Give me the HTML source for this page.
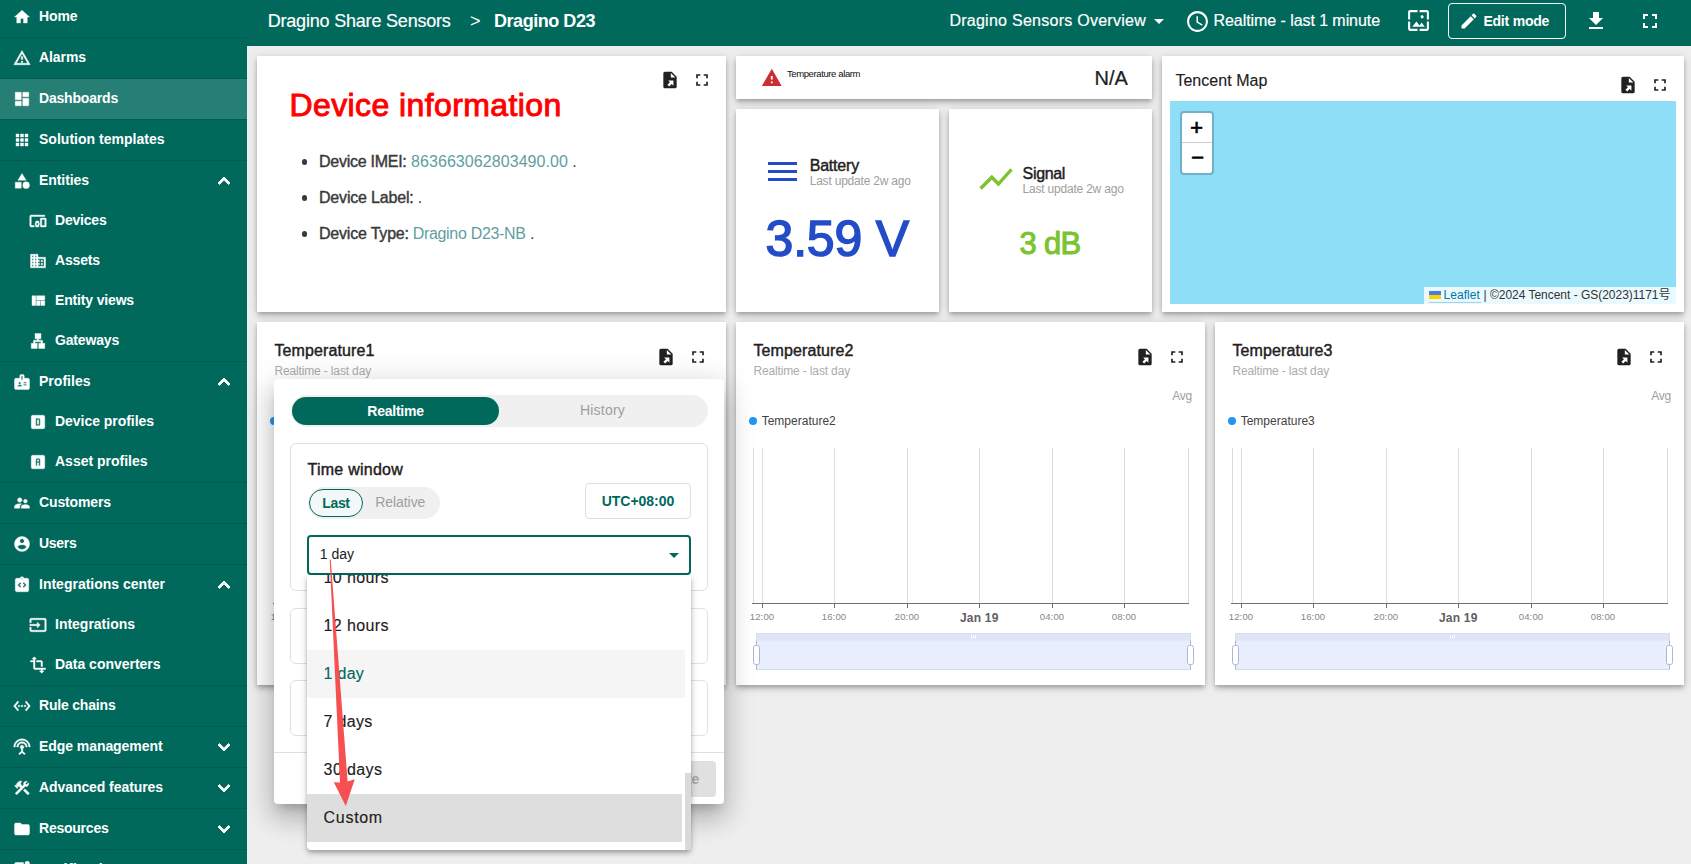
<!DOCTYPE html>
<html lang="en"><head><meta charset="utf-8"><title>Dragino D23</title>
<style>
html,body{margin:0;padding:0}
body{width:1691px;height:864px;overflow:hidden;background:#eee;position:relative;font-family:"Liberation Sans",sans-serif;}
.t{position:absolute;white-space:pre;line-height:1;display:block}
.b{position:absolute;box-sizing:border-box}
.i{position:absolute;display:block}
.card{position:absolute;background:#fff;box-shadow:0 2px 4px -1px rgba(0,0,0,.2),0 4px 5px 0 rgba(0,0,0,.14),0 1px 10px 0 rgba(0,0,0,.12)}
</style></head>
<body>
<div class="b" style="left:0px;top:0px;width:247px;height:864px;background:#00695c"></div>
<div class="b" style="left:247px;top:0px;width:1444px;height:46px;background:#00695c"></div>
<div class="b" style="left:0px;top:79px;width:247px;height:40px;background:rgba(255,255,255,.15)"></div>
<svg class="i" style="left:13.00px;top:8.00px;width:18px;height:18px;fill:#fff;stroke:#fff;stroke-width:.5;" viewBox="0 0 24 24"><path fill-rule="evenodd" d="M10 20v-6h4v6h5v-8h3L12 3 2 12h3v8z"/></svg>
<span class="t" style="left:39.00px;top:9.35px;font-size:14px;color:#fff;font-weight:700;letter-spacing:-0.102px;">Home</span>
<svg class="i" style="left:13.00px;top:49.00px;width:18px;height:18px;fill:#fff;stroke:#fff;stroke-width:.5;" viewBox="0 0 24 24"><path fill-rule="evenodd" d="M12 5.99L19.53 19H4.47L12 5.99M12 2L1 21h22L12 2zm1 14h-2v2h2v-2zm0-6h-2v4h2v-4z"/></svg>
<span class="t" style="left:39.00px;top:50.35px;font-size:14px;color:#fff;font-weight:700;letter-spacing:-0.078px;">Alarms</span>
<svg class="i" style="left:13.00px;top:90.00px;width:18px;height:18px;fill:#fff;stroke:#fff;stroke-width:.5;" viewBox="0 0 24 24"><path fill-rule="evenodd" d="M3 13h8V3H3v10zm0 8h8v-6H3v6zm10 0h8V11h-8v10zm0-18v6h8V3h-8z"/></svg>
<span class="t" style="left:39.00px;top:91.35px;font-size:14px;color:#fff;font-weight:700;letter-spacing:-0.192px;">Dashboards</span>
<svg class="i" style="left:13.00px;top:131.00px;width:18px;height:18px;fill:#fff;stroke:#fff;stroke-width:.5;" viewBox="0 0 24 24"><path fill-rule="evenodd" d="M4 8h4V4H4v4zm6 12h4v-4h-4v4zm-6 0h4v-4H4v4zm0-6h4v-4H4v4zm6 0h4v-4h-4v4zm6-10v4h4V4h-4zm-6 4h4V4h-4v4zm6 6h4v-4h-4v4zm0 6h4v-4h-4v4z"/></svg>
<span class="t" style="left:39.00px;top:132.35px;font-size:14px;color:#fff;font-weight:700;letter-spacing:0.015px;">Solution templates</span>
<svg class="i" style="left:13.00px;top:172.00px;width:18px;height:18px;fill:#fff;stroke:#fff;stroke-width:.5;" viewBox="0 0 24 24"><path fill-rule="evenodd" d="M12 2l-5.5 9h11L12 2zM17.5 13a4.5 4.5 0 1 0 0 9a4.5 4.5 0 1 0 0-9zM3 13.5h8v8H3z"/></svg>
<span class="t" style="left:39.00px;top:173.35px;font-size:14px;color:#fff;font-weight:700;letter-spacing:-0.072px;">Entities</span>
<svg class="i" style="left:211.60px;top:169.30px;width:24px;height:24px;fill:#fff;stroke:#fff;stroke-width:1;stroke-linejoin:miter;" viewBox="0 0 24 24"><path fill-rule="evenodd" d="M12 8l-6 6 1.41 1.41L12 10.83l4.59 4.580L18 14z"/></svg>
<svg class="i" style="left:29.00px;top:212.00px;width:18px;height:18px;fill:#fff;stroke:#fff;stroke-width:.5;" viewBox="0 0 24 24"><path fill-rule="evenodd" d="M3 6h18V4H3c-1.1 0-2 .9-2 2v12c0 1.1.9 2 2 2h4v-2H3V6zm10 6H9v1.78c-.61.55-1 1.33-1 2.22s.39 1.67 1 2.22V20h4v-1.780c.61-.55 1-1.34 1-2.22s-.39-1.67-1-2.22V12zm-2 5.5c-.83 0-1.5-.67-1.5-1.5s.67-1.5 1.5-1.5 1.5.67 1.5 1.5-.67 1.5-1.5 1.5zM22 8h-6c-.5 0-1 .5-1 1v10c0 .5.5 1 1 1h6c.5 0 1-.5 1-1V9c0-.5-.5-1-1-1zm-1 10h-4v-8h4v8z"/></svg>
<span class="t" style="left:55.00px;top:213.35px;font-size:14px;color:#fff;font-weight:700;letter-spacing:-0.205px;">Devices</span>
<svg class="i" style="left:29.00px;top:252.00px;width:18px;height:18px;fill:#fff;stroke:#fff;stroke-width:.5;" viewBox="0 0 24 24"><path fill-rule="evenodd" d="M12 7V3H2v18h20V7H12zM6 19H4v-2h2v2zm0-4H4v-2h2v2zm0-4H4V9h2v2zm0-4H4V5h2v2zm4 12H8v-2h2v2zm0-4H8v-2h2v2zm0-4H8V9h2v2zm0-4H8V5h2v2zm10 12h-8v-2h2v-2h-2v-2h2v-2h-2V9h8v10zm-2-8h-2v2h2v-2zm0 4h-2v2h2v-2z"/></svg>
<span class="t" style="left:55.00px;top:253.35px;font-size:14px;color:#fff;font-weight:700;letter-spacing:-0.154px;">Assets</span>
<svg class="i" style="left:29.00px;top:292.00px;width:18px;height:18px;fill:#fff;stroke:#fff;stroke-width:.5;" viewBox="0 0 24 24"><path fill-rule="evenodd" d="M10 18h5v-6h-5v6zm-6 0h5V5H4v13zm12 0h5v-6h-5v6zM10 5v6h11V5H10z"/></svg>
<span class="t" style="left:55.00px;top:293.35px;font-size:14px;color:#fff;font-weight:700;letter-spacing:-0.160px;">Entity views</span>
<svg class="i" style="left:29.00px;top:332.00px;width:18px;height:18px;fill:#fff;stroke:#fff;stroke-width:.5;" viewBox="0 0 24 24"><path fill-rule="evenodd" d="M13 22h8v-7h-3v-4h-5V9h3V2H8v7h3v2H6v4H3v7h8v-7H8v-2h8v2h-3z"/></svg>
<span class="t" style="left:55.00px;top:333.35px;font-size:14px;color:#fff;font-weight:700;letter-spacing:-0.172px;">Gateways</span>
<svg class="i" style="left:13.00px;top:373.00px;width:18px;height:18px;fill:#fff;stroke:#fff;stroke-width:.5;" viewBox="0 0 24 24"><path fill-rule="evenodd" d="M20 7h-5V4c0-1.1-.9-2-2-2h-2c-1.1 0-2 .9-2 2v3H4c-1.1 0-2 .9-2 2v11c0 1.1.9 2 2 2h16c1.1 0 2-.9 2-2V9c0-1.1-.9-2-2-2zM9 12c.83 0 1.5.67 1.5 1.5S9.83 15 9 15s-1.5-.67-1.5-1.5S8.17 12 9 12zm3 6H6v-.75c0-1 2-1.5 3-1.5s3 .5 3 1.5V18zm1-9h-2V4h2v5zm5 7.5h-4V15h4v1.5zm0-3h-4V12h4v1.5z"/></svg>
<span class="t" style="left:39.00px;top:374.35px;font-size:14px;color:#fff;font-weight:700;letter-spacing:0.018px;">Profiles</span>
<svg class="i" style="left:211.60px;top:370.30px;width:24px;height:24px;fill:#fff;stroke:#fff;stroke-width:1;stroke-linejoin:miter;" viewBox="0 0 24 24"><path fill-rule="evenodd" d="M12 8l-6 6 1.41 1.41L12 10.83l4.59 4.580L18 14z"/></svg>
<svg class="i" style="left:29.00px;top:413.00px;width:18px;height:18px;fill:#fff;stroke:#fff;stroke-width:.5;" viewBox="0 0 24 24"><path fill-rule="evenodd" d="M9,7H13A2,2 0 0,1 15,9V15A2,2 0 0,1 13,17H9V7M11,9V15H13V9H11M5,3H19A2,2 0 0,1 21,5V19A2,2 0 0,1 19,21H5A2,2 0 0,1 3,19V5A2,2 0 0,1 5,3Z"/></svg>
<span class="t" style="left:55.00px;top:414.35px;font-size:14px;color:#fff;font-weight:700;letter-spacing:-0.041px;">Device profiles</span>
<svg class="i" style="left:29.00px;top:453.00px;width:18px;height:18px;fill:#fff;stroke:#fff;stroke-width:.5;" viewBox="0 0 24 24"><path fill-rule="evenodd" d="M11,7H13A2,2 0 0,1 15,9V17H13V13H11V17H9V9A2,2 0 0,1 11,7M11,9V11H13V9H11M5,3H19A2,2 0 0,1 21,5V19A2,2 0 0,1 19,21H5A2,2 0 0,1 3,19V5A2,2 0 0,1 5,3Z"/></svg>
<span class="t" style="left:55.00px;top:454.35px;font-size:14px;color:#fff;font-weight:700;letter-spacing:-0.007px;">Asset profiles</span>
<svg class="i" style="left:13.00px;top:494.00px;width:18px;height:18px;fill:#fff;stroke:#fff;stroke-width:.5;" viewBox="0 0 24 24"><path fill-rule="evenodd" d="M16.5 12c1.38 0 2.49-1.12 2.49-2.5S17.88 7 16.5 7C15.12 7 14 8.12 14 9.5s1.12 2.5 2.5 2.5zM9 11c1.66 0 2.99-1.34 2.99-3S10.66 5 9 5C7.34 5 6 6.34 6 8s1.34 3 3 3zm7.5 3c-1.83 0-5.5.92-5.5 2.75V19h11v-2.25c0-1.83-3.67-2.75-5.5-2.75zM9 13c-2.33 0-7 1.17-7 3.5V19h7v-2.25c0-.85.33-2.34 2.37-3.47C10.5 13.1 9.66 13 9 13z"/></svg>
<span class="t" style="left:39.00px;top:495.35px;font-size:14px;color:#fff;font-weight:700;letter-spacing:-0.127px;">Customers</span>
<svg class="i" style="left:13.00px;top:535.00px;width:18px;height:18px;fill:#fff;stroke:#fff;stroke-width:.5;" viewBox="0 0 24 24"><path fill-rule="evenodd" d="M12 2C6.48 2 2 6.48 2 12s4.48 10 10 10 10-4.48 10-10S17.52 2 12 2zm0 3c1.66 0 3 1.34 3 3s-1.34 3-3 3-3-1.34-3-3 1.34-3 3-3zm0 14.2c-2.5 0-4.71-1.28-6-3.22.03-1.99 4-3.08 6-3.08 1.99 0 5.97 1.09 6 3.08-1.29 1.94-3.5 3.22-6 3.22z"/></svg>
<span class="t" style="left:39.00px;top:536.35px;font-size:14px;color:#fff;font-weight:700;letter-spacing:-0.284px;">Users</span>
<svg class="i" style="left:13.00px;top:576.00px;width:18px;height:18px;fill:#fff;stroke:#fff;stroke-width:.5;" viewBox="0 0 24 24"><path fill-rule="evenodd" d="M19 3h-4.18C14.4 1.84 13.3 1 12 1c-1.3 0-2.4.84-2.82 2H5c-.14 0-.27.01-.4.04-.39.08-.74.28-1.01.55-.18.18-.33.4-.43.64-.1.23-.16.49-.16.77v14c0 .27.06.54.16.78s.25.45.43.64c.27.27.62.47 1.01.55.13.02.26.03.4.03h14c1.1 0 2-.9 2-2V5c0-1.1-.9-2-2-2zm-8 11.17l-1.41 1.42L6 12l3.59-3.59L11 9.83 8.83 12 11 14.170zm1-9.92c-.41 0-.75-.34-.75-.75s.34-.75.75-.75.75.34.75.75-.34.75-.75.75zm2.410 11.340L13 14.170 15.170 12 13 9.830l1.410-1.420L18 12l-3.590 3.590z"/></svg>
<span class="t" style="left:39.00px;top:577.35px;font-size:14px;color:#fff;font-weight:700;">Integrations center</span>
<svg class="i" style="left:211.60px;top:573.30px;width:24px;height:24px;fill:#fff;stroke:#fff;stroke-width:1;stroke-linejoin:miter;" viewBox="0 0 24 24"><path fill-rule="evenodd" d="M12 8l-6 6 1.41 1.41L12 10.83l4.59 4.580L18 14z"/></svg>
<svg class="i" style="left:29.00px;top:616.00px;width:18px;height:18px;fill:#fff;stroke:#fff;stroke-width:.5;" viewBox="0 0 24 24"><path fill-rule="evenodd" d="M21 3.01H3c-1.1 0-2 .9-2 2V9h2V4.99h18v14.030H3V15H1v4.010c0 1.1.9 1.980 2 1.980h18c1.1 0 2-.88 2-1.980v-14c0-1.110-.9-2-2-2zM11 16l4-4-4-4v3H1v2h10v3z"/></svg>
<span class="t" style="left:55.00px;top:617.35px;font-size:14px;color:#fff;font-weight:700;letter-spacing:-0.010px;">Integrations</span>
<svg class="i" style="left:29.00px;top:656.00px;width:18px;height:18px;fill:#fff;stroke:#fff;stroke-width:.5;" viewBox="0 0 24 24"><path fill-rule="evenodd" d="M22 18v-2H8V4h2L7 1 4 4h2v2H2v2h4v8c0 1.1.9 2 2 2h8v2h-2l3 3 3-3h-2v-2h4zM10 8h6v6h2V8c0-1.1-.9-2-2-2h-6v2z"/></svg>
<span class="t" style="left:55.00px;top:657.35px;font-size:14px;color:#fff;font-weight:700;letter-spacing:-0.022px;">Data converters</span>
<svg class="i" style="left:13.00px;top:697.00px;width:18px;height:18px;fill:#fff;stroke:#fff;stroke-width:.5;" viewBox="0 0 24 24"><path fill-rule="evenodd" d="M7.77 6.76L6.23 5.48.82 12l5.41 6.52 1.54-1.28L3.42 12l4.35-5.24zM7 13h2v-2H7v2zm10-2h-2v2h2v-2zm-6 2h2v-2h-2v2zm6.77-7.52l-1.54 1.28L20.58 12l-4.35 5.24 1.54 1.28L23.18 12l-5.41-6.52z"/></svg>
<span class="t" style="left:39.00px;top:698.35px;font-size:14px;color:#fff;font-weight:700;letter-spacing:-0.190px;">Rule chains</span>
<svg class="i" style="left:13.00px;top:738.00px;width:18px;height:18px;fill:#fff;stroke:#fff;stroke-width:.5;" viewBox="0 0 24 24"><path fill-rule="evenodd" d="M12 5c-3.87 0-7 3.13-7 7h2c0-2.76 2.24-5 5-5s5 2.24 5 5h2c0-3.87-3.13-7-7-7zm1 9.29c.88-.39 1.5-1.26 1.5-2.29 0-1.38-1.12-2.5-2.5-2.5S9.5 10.62 9.5 12c0 1.02.62 1.9 1.5 2.29v3.3L7.59 21 9 22.41l3-3 3 3L16.41 21 13 17.59v-3.3zM12 1C5.93 1 1 5.93 1 12h2c0-4.97 4.03-9 9-9s9 4.03 9 9h2c0-6.07-4.93-11-11-11z"/></svg>
<span class="t" style="left:39.00px;top:739.35px;font-size:14px;color:#fff;font-weight:700;letter-spacing:-0.066px;">Edge management</span>
<svg class="i" style="left:211.60px;top:735.30px;width:24px;height:24px;fill:#fff;stroke:#fff;stroke-width:1;stroke-linejoin:miter;" viewBox="0 0 24 24"><path fill-rule="evenodd" d="M16.59 8.59L12 13.17 7.41 8.59 6 10l6 6 6-6z"/></svg>
<svg class="i" style="left:13.00px;top:779.00px;width:18px;height:18px;fill:#fff;stroke:#fff;stroke-width:.5;" viewBox="0 0 24 24"><path fill-rule="evenodd" d="M13.783 15.172l2.121-2.121 5.996 5.996-2.121 2.121zM17.5 10c1.93 0 3.5-1.57 3.5-3.5 0-.58-.16-1.12-.41-1.6l-2.7 2.7-1.49-1.49 2.7-2.7c-.48-.25-1.02-.41-1.6-.41C15.57 3 14 4.57 14 6.5c0 .41.08.8.21 1.16l-1.85 1.85-1.78-1.780.71-.71-1.41-1.41L12 3.490c-1.17-1.17-3.07-1.17-4.24 0L4.220 7.030l1.410 1.410H2.810l-.71.71 3.540 3.540.71-.71V9.150l1.410 1.410.71-.71 1.780 1.780-7.410 7.410 2.120 2.120L16.340 9.790c.36.13.75.21 1.160.21z"/></svg>
<span class="t" style="left:39.00px;top:780.35px;font-size:14px;color:#fff;font-weight:700;letter-spacing:-0.075px;">Advanced features</span>
<svg class="i" style="left:211.60px;top:776.30px;width:24px;height:24px;fill:#fff;stroke:#fff;stroke-width:1;stroke-linejoin:miter;" viewBox="0 0 24 24"><path fill-rule="evenodd" d="M16.59 8.59L12 13.17 7.41 8.59 6 10l6 6 6-6z"/></svg>
<svg class="i" style="left:13.00px;top:820.00px;width:18px;height:18px;fill:#fff;stroke:#fff;stroke-width:.5;" viewBox="0 0 24 24"><path fill-rule="evenodd" d="M10 4H4c-1.1 0-1.99.9-1.99 2L2 18c0 1.1.9 2 2 2h16c1.1 0 2-.9 2-2V8c0-1.1-.9-2-2-2h-8l-2-2z"/></svg>
<span class="t" style="left:39.00px;top:821.35px;font-size:14px;color:#fff;font-weight:700;letter-spacing:-0.233px;">Resources</span>
<svg class="i" style="left:211.60px;top:817.30px;width:24px;height:24px;fill:#fff;stroke:#fff;stroke-width:1;stroke-linejoin:miter;" viewBox="0 0 24 24"><path fill-rule="evenodd" d="M16.59 8.59L12 13.17 7.41 8.59 6 10l6 6 6-6z"/></svg>
<svg class="i" style="left:13.00px;top:861.00px;width:18px;height:18px;fill:#fff;stroke:#fff;stroke-width:.5;" viewBox="0 0 24 24"><path fill-rule="evenodd" d="M22 6.980V16c0 1.100-.900 2-2 2H6l-4 4V4c0-1.100.900-2 2-2h10.100c-.060.320-.100.660-.100 1 0 2.760 2.240 5 5 5 1.130 0 2.160-.390 3-1.020zM16 3c0 1.660 1.340 3 3 3s3-1.340 3-3-1.340-3-3-3-3 1.340-3 3z"/></svg>
<span class="t" style="left:39.00px;top:862.35px;font-size:14px;color:#fff;font-weight:700;letter-spacing:0.426px;">Notification center</span>
<div class="b" style="left:0px;top:37px;width:247px;height:1px;background:rgba(0,0,0,.12)"></div>
<div class="b" style="left:0px;top:78px;width:247px;height:1px;background:rgba(0,0,0,.12)"></div>
<div class="b" style="left:0px;top:119px;width:247px;height:1px;background:rgba(0,0,0,.12)"></div>
<div class="b" style="left:0px;top:160px;width:247px;height:1px;background:rgba(0,0,0,.12)"></div>
<div class="b" style="left:0px;top:361px;width:247px;height:1px;background:rgba(0,0,0,.12)"></div>
<div class="b" style="left:0px;top:482px;width:247px;height:1px;background:rgba(0,0,0,.12)"></div>
<div class="b" style="left:0px;top:523px;width:247px;height:1px;background:rgba(0,0,0,.12)"></div>
<div class="b" style="left:0px;top:564px;width:247px;height:1px;background:rgba(0,0,0,.12)"></div>
<div class="b" style="left:0px;top:685px;width:247px;height:1px;background:rgba(0,0,0,.12)"></div>
<div class="b" style="left:0px;top:726px;width:247px;height:1px;background:rgba(0,0,0,.12)"></div>
<div class="b" style="left:0px;top:767px;width:247px;height:1px;background:rgba(0,0,0,.12)"></div>
<div class="b" style="left:0px;top:808px;width:247px;height:1px;background:rgba(0,0,0,.12)"></div>
<div class="b" style="left:0px;top:849px;width:247px;height:1px;background:rgba(0,0,0,.12)"></div>
<span class="t" style="left:267.70px;top:11.76px;font-size:18px;color:#fff;-webkit-text-stroke:0.18px #fff;letter-spacing:-0.196px;">Dragino Share Sensors</span>
<span class="t" style="left:470.00px;top:11.76px;font-size:18px;color:#fff;letter-spacing:-1.016px;">&gt;</span>
<span class="t" style="left:494.00px;top:11.76px;font-size:18px;color:#fff;font-weight:700;letter-spacing:-0.457px;">Dragino D23</span>
<span class="t" style="left:949.40px;top:13.26px;font-size:16px;color:#fff;-webkit-text-stroke:0.19px #fff;letter-spacing:0.263px;">Dragino Sensors Overview</span>
<svg class="i" style="left:1154.3px;top:19.2px;width:10px;height:5px;fill:#fff" viewBox="0 0 10 5"><path d="M0 0h10L5 5z"/></svg>
<svg class="i" style="left:1184.50px;top:9.00px;width:25px;height:25px;fill:#fff;" viewBox="0 0 24 24"><path fill-rule="evenodd" d="M11.99 2C6.47 2 2 6.48 2 12s4.47 10 9.99 10C17.52 22 22 17.52 22 12S17.52 2 11.99 2zM12 20c-4.42 0-8-3.58-8-8s3.58-8 8-8 8 3.58 8 8-3.58 8-8 8zm.5-13H11v6l5.25 3.15.75-1.23-4.5-2.67z"/></svg>
<span class="t" style="left:1213.50px;top:13.26px;font-size:16px;color:#fff;-webkit-text-stroke:0.19px #fff;letter-spacing:-0.065px;">Realtime - last 1 minute</span>
<svg class="i" style="left:1405.50px;top:8.40px;width:25px;height:25px;fill:#fff;" viewBox="0 0 24 24"><path fill-rule="evenodd" d="M4 4h7V2H4c-1.1 0-2 .9-2 2v7h2V4zm6 9l-4 5h12l-3-4-2.03 2.71L10 13zm7-4.5c0-.83-.67-1.5-1.5-1.5S14 7.67 14 8.5s.67 1.5 1.5 1.5S17 9.33 17 8.5zM20 2h-7v2h7v7h2V4c0-1.1-.9-2-2-2zm0 18h-7v2h7c1.1 0 2-.9 2-2v-7h-2v7zM4 13H2v7c0 1.1.9 2 2 2h7v-2H4v-7z"/></svg>
<div class="b" style="left:1448px;top:3px;width:118px;height:36px;border:1px solid #fff;border-radius:4px"></div>
<svg class="i" style="left:1459.00px;top:11.00px;width:20px;height:20px;fill:#fff;" viewBox="0 0 24 24"><path fill-rule="evenodd" d="M3 17.25V21h3.75L17.81 9.94l-3.75-3.75L3 17.25zM20.71 7.04c.39-.39.39-1.02 0-1.41l-2.34-2.34c-.39-.39-1.02-.39-1.41 0l-1.83 1.83 3.75 3.75 1.83-1.83z"/></svg>
<span class="t" style="left:1483.40px;top:14.45px;font-size:14px;color:#fff;font-weight:700;letter-spacing:-0.208px;">Edit mode</span>
<svg class="i" style="left:1584.00px;top:8.50px;width:24px;height:24px;fill:#fff;" viewBox="0 0 24 24"><path fill-rule="evenodd" d="M19 9h-4V3H9v6H5l7 7 7-7zM5 18v2h14v-2H5z"/></svg>
<svg class="i" style="left:1638.00px;top:9.00px;width:24px;height:24px;fill:#fff;" viewBox="0 0 24 24"><path fill-rule="evenodd" d="M7 14H5v5h5v-2H7v-3zm-2-4h2V7h3V5H5v5zm12 7h-3v2h5v-5h-2v3zM14 5v2h3v3h2V5h-5z"/></svg>
<div class="card" style="left:257px;top:56px;width:469px;height:256px"></div>
<svg class="i" style="left:660.00px;top:70.00px;width:20px;height:20px;fill:#212121;" viewBox="0 0 24 24"><path fill-rule="evenodd" d="M6 2h8l6 6v12a2 2 0 0 1-2 2H6a2 2 0 0 1-2-2V4a2 2 0 0 1 2-2zM13 3.500V9h5.500zM9.800 12.700H16.100V19L14.010 16.910L11.010 19.910L8.890 17.790L11.890 14.790Z"/></svg>
<svg class="i" style="left:692.00px;top:70.00px;width:20px;height:20px;fill:#212121;" viewBox="0 0 24 24"><path fill-rule="evenodd" d="M7 14H5v5h5v-2H7v-3zm-2-4h2V7h3V5H5v5zm12 7h-3v2h5v-5h-2v3zM14 5v2h3v3h2V5h-5z"/></svg>
<span class="t" style="left:289.50px;top:88.51px;font-size:32px;color:#ff0000;-webkit-text-stroke:0.96px #ff0000;letter-spacing:0.400px;">Device information</span>
<div class="b" style="left:301.8px;top:159.3px;width:5.4px;height:5.4px;border-radius:50%;background:#3a3a3a"></div>
<span class="t" style="left:319.00px;top:153.86px;font-size:16px;color:#3a3a3a;-webkit-text-stroke:0.42px #3a3a3a;letter-spacing:-0.266px;">Device IMEI:</span>
<div class="b" style="left:301.8px;top:195.3px;width:5.4px;height:5.4px;border-radius:50%;background:#3a3a3a"></div>
<span class="t" style="left:319.00px;top:189.86px;font-size:16px;color:#3a3a3a;-webkit-text-stroke:0.42px #3a3a3a;letter-spacing:-0.181px;">Device Label:</span>
<div class="b" style="left:301.8px;top:231.3px;width:5.4px;height:5.4px;border-radius:50%;background:#3a3a3a"></div>
<span class="t" style="left:319.00px;top:225.86px;font-size:16px;color:#3a3a3a;-webkit-text-stroke:0.42px #3a3a3a;letter-spacing:-0.200px;">Device Type:</span>
<span class="t" style="left:411.00px;top:153.86px;font-size:16px;color:#5f9ea0;letter-spacing:0.071px;">863663062803490.00</span>
<span class="t" style="left:572.30px;top:153.86px;font-size:16px;color:#3a3a3a;letter-spacing:-0.125px;">.</span>
<span class="t" style="left:417.80px;top:189.86px;font-size:16px;color:#3a3a3a;letter-spacing:-0.125px;">.</span>
<span class="t" style="left:412.70px;top:225.86px;font-size:16px;color:#5f9ea0;letter-spacing:-0.314px;">Dragino D23-NB</span>
<span class="t" style="left:530.00px;top:225.86px;font-size:16px;color:#3a3a3a;letter-spacing:-0.125px;">.</span>
<div class="card" style="left:736px;top:56px;width:416px;height:43px"></div>
<svg class="i" style="left:760.65px;top:67.20px;width:21.6px;height:21.6px;fill:#cc2f33;" viewBox="0 0 24 24"><path fill-rule="evenodd" d="M1 21h22L12 2 1 21zm12-3h-2v-2h2v2zm0-4h-2v-4h2v4z"/></svg>
<span class="t" style="left:786.90px;top:68.86px;font-size:9.5px;color:#111;letter-spacing:-0.384px;">Temperature alarm</span>
<span class="t" style="left:1094.50px;top:68.27px;font-size:20px;color:#212121;-webkit-text-stroke:0.24px #212121;letter-spacing:0.052px;">N/A</span>
<div class="card" style="left:736px;top:109px;width:203px;height:203px"></div>
<div class="b" style="left:768px;top:162px;width:29.4px;height:3px;background:#234cc7"></div>
<div class="b" style="left:768px;top:170px;width:29.4px;height:3px;background:#234cc7"></div>
<div class="b" style="left:768px;top:178px;width:29.4px;height:3px;background:#234cc7"></div>
<span class="t" style="left:809.70px;top:157.76px;font-size:16px;color:#212121;-webkit-text-stroke:0.42px #212121;letter-spacing:-0.198px;">Battery</span>
<span class="t" style="left:809.70px;top:175.24px;font-size:12px;color:#9e9e9e;letter-spacing:-0.208px;">Last update 2w ago</span>
<span class="t" style="left:765.60px;top:213.98px;font-size:50px;color:#234cc7;-webkit-text-stroke:1.50px #234cc7;letter-spacing:-0.210px;">3.59 V</span>
<div class="card" style="left:949px;top:109px;width:203px;height:203px"></div>
<svg class="i" style="left:975.60px;top:158.90px;width:40px;height:40px;fill:#7cc332;" viewBox="0 0 24 24"><path fill-rule="evenodd" d="M3.5 18.49l6-6.01 4 4L22 6.92l-1.41-1.41-7.09 7.97-4-4L2 16.99z"/></svg>
<span class="t" style="left:1022.60px;top:165.56px;font-size:16px;color:#212121;-webkit-text-stroke:0.42px #212121;letter-spacing:-0.347px;">Signal</span>
<span class="t" style="left:1022.60px;top:183.14px;font-size:12px;color:#9e9e9e;letter-spacing:-0.208px;">Last update 2w ago</span>
<span class="t" style="left:1019.40px;top:228.36px;font-size:31px;color:#7cc332;-webkit-text-stroke:1.05px #7cc332;letter-spacing:-0.645px;">3 dB</span>
<div class="card" style="left:1162px;top:56px;width:522px;height:256px"></div>
<span class="t" style="left:1175.40px;top:72.76px;font-size:16px;color:#212121;-webkit-text-stroke:0.13px #212121;letter-spacing:0.036px;">Tencent Map</span>
<svg class="i" style="left:1618.00px;top:75.00px;width:20px;height:20px;fill:#212121;" viewBox="0 0 24 24"><path fill-rule="evenodd" d="M6 2h8l6 6v12a2 2 0 0 1-2 2H6a2 2 0 0 1-2-2V4a2 2 0 0 1 2-2zM13 3.500V9h5.500zM9.800 12.700H16.100V19L14.010 16.910L11.010 19.910L8.890 17.790L11.890 14.790Z"/></svg>
<svg class="i" style="left:1650.00px;top:75.00px;width:20px;height:20px;fill:#212121;" viewBox="0 0 24 24"><path fill-rule="evenodd" d="M7 14H5v5h5v-2H7v-3zm-2-4h2V7h3V5H5v5zm12 7h-3v2h5v-5h-2v3zM14 5v2h3v3h2V5h-5z"/></svg>
<div class="b" style="left:1170px;top:101px;width:506px;height:203px;background:#8fdef7"></div>
<div class="b" style="left:1180px;top:111px;width:34px;height:64px;border:2px solid rgba(0,0,0,.2);border-radius:4px;background-clip:padding-box;background:#fff;background-clip:padding-box"></div>
<div class="b" style="left:1182px;top:142px;width:30px;height:1px;background:#ccc"></div>
<span class="t" style="left:1190.10px;top:119.08px;font-size:22px;color:#000;-webkit-text-stroke:0.66px #000;letter-spacing:-0.203px;font-family:'Liberation Mono',monospace;">+</span>
<span class="t" style="left:1191.00px;top:148.88px;font-size:22px;color:#000;-webkit-text-stroke:0.66px #000;letter-spacing:-0.203px;font-family:'Liberation Mono',monospace;">−</span>
<div class="b" style="left:1424px;top:287px;width:252px;height:17px;background:rgba(255,255,255,.8)"></div>
<svg class="i" style="left:1429px;top:291px;width:12px;height:8px" viewBox="0 0 12 8"><path fill="#4C7BE1" d="M0 0h12v4H0z"/><path fill="#FFD500" d="M0 4h12v4H0z"/></svg>
<span class="t" style="left:1443.50px;top:288.84px;font-size:12px;color:#0078a8;letter-spacing:0.067px;">Leaflet</span>
<div class="b" style="left:1429px;top:301.5px;width:51.5px;height:1px;background:rgba(0,120,168,.3)"></div>
<span class="t" style="left:1483.50px;top:288.84px;font-size:12px;color:#333;letter-spacing:-0.021px;font-family:'Liberation Sans','Noto Sans CJK SC',sans-serif;">| ©2024 Tencent - GS(2023)1171号</span>
<div class="card" style="left:257px;top:322px;width:469px;height:363px"></div>
<span class="t" style="left:274.50px;top:343.06px;font-size:16px;color:#212121;-webkit-text-stroke:0.42px #212121;letter-spacing:0.107px;">Temperature1</span>
<span class="t" style="left:274.50px;top:364.64px;font-size:12px;color:#ababab;letter-spacing:-0.151px;">Realtime - last day</span>
<svg class="i" style="left:656.00px;top:347.00px;width:20px;height:20px;fill:#212121;" viewBox="0 0 24 24"><path fill-rule="evenodd" d="M6 2h8l6 6v12a2 2 0 0 1-2 2H6a2 2 0 0 1-2-2V4a2 2 0 0 1 2-2zM13 3.500V9h5.500zM9.800 12.700H16.100V19L14.010 16.910L11.010 19.910L8.890 17.790L11.890 14.790Z"/></svg>
<svg class="i" style="left:688.00px;top:347.00px;width:20px;height:20px;fill:#212121;" viewBox="0 0 24 24"><path fill-rule="evenodd" d="M7 14H5v5h5v-2H7v-3zm-2-4h2V7h3V5H5v5zm12 7h-3v2h5v-5h-2v3zM14 5v2h3v3h2V5h-5z"/></svg>
<div class="b" style="left:270px;top:417.2px;width:8px;height:8px;border-radius:50%;background:#2196f3"></div>
<span class="t" style="left:693.30px;top:390.14px;font-size:12px;color:#9e9e9e;letter-spacing:-0.323px;">Avg</span>
<span class="t" style="left:282.70px;top:415.14px;font-size:12px;color:#424242;">Temperature1</span>
<svg class="i" style="left:257px;top:322px;width:469px;height:363px" viewBox="0 0 469 363"><path d="M17.5 126V281" stroke="#dcdcdc" stroke-width="1"/><path d="M26.5 126V281" stroke="#dcdcdc" stroke-width="1"/><path d="M98.5 126V281" stroke="#dcdcdc" stroke-width="1"/><path d="M171.5 126V281" stroke="#dcdcdc" stroke-width="1"/><path d="M243.5 126V281" stroke="#dcdcdc" stroke-width="1"/><path d="M316.5 126V281" stroke="#dcdcdc" stroke-width="1"/><path d="M388.5 126V281" stroke="#dcdcdc" stroke-width="1"/><path d="M452.5 126V281" stroke="#dcdcdc" stroke-width="1"/><path d="M16 281.500H453" stroke="#6e7079" stroke-width="1"/><path d="M26.5 281V286" stroke="#6e7079" stroke-width="1"/><path d="M98.5 281V286" stroke="#6e7079" stroke-width="1"/><path d="M171.5 281V286" stroke="#6e7079" stroke-width="1"/><path d="M243.5 281V286" stroke="#6e7079" stroke-width="1"/><path d="M316.5 281V286" stroke="#6e7079" stroke-width="1"/><path d="M388.5 281V286" stroke="#6e7079" stroke-width="1"/><rect x="20.500" y="311.500" width="434" height="36" fill="#e9eeff" stroke="#d2dbee" stroke-width="1"/><rect x="20.500" y="311.500" width="434" height="7" fill="#dfe4f6"/><path d="M235.500 313.500v3M237.500 313.500v3M239.500 313.500v3" stroke="#fff" stroke-width="1"/><path d="M20.5 318.500V347.500" stroke="#acb8d1" stroke-width="1"/><rect x="17.5" y="323.500" width="6" height="19" rx="2" fill="#fff" stroke="#acb8d1" stroke-width="1"/><path d="M454.5 318.500V347.500" stroke="#acb8d1" stroke-width="1"/><rect x="451.5" y="323.500" width="6" height="19" rx="2" fill="#fff" stroke="#acb8d1" stroke-width="1"/></svg>
<span class="t" style="left:270.75px;top:612.47px;font-size:9.6px;color:#878787;letter-spacing:0.097px;">12:00</span>
<span class="t" style="left:342.75px;top:612.47px;font-size:9.6px;color:#878787;letter-spacing:0.097px;">16:00</span>
<span class="t" style="left:415.75px;top:612.47px;font-size:9.6px;color:#878787;letter-spacing:0.097px;">20:00</span>
<span class="t" style="left:560.75px;top:612.47px;font-size:9.6px;color:#878787;letter-spacing:0.097px;">04:00</span>
<span class="t" style="left:632.75px;top:612.47px;font-size:9.6px;color:#878787;letter-spacing:0.097px;">08:00</span>
<span class="t" style="left:480.90px;top:611.74px;font-size:12px;color:#606060;font-weight:700;letter-spacing:0.240px;">Jan 19</span>
<div class="card" style="left:736px;top:322px;width:469px;height:363px"></div>
<span class="t" style="left:753.50px;top:343.06px;font-size:16px;color:#212121;-webkit-text-stroke:0.42px #212121;letter-spacing:0.107px;">Temperature2</span>
<span class="t" style="left:753.50px;top:364.64px;font-size:12px;color:#ababab;letter-spacing:-0.151px;">Realtime - last day</span>
<svg class="i" style="left:1135.00px;top:347.00px;width:20px;height:20px;fill:#212121;" viewBox="0 0 24 24"><path fill-rule="evenodd" d="M6 2h8l6 6v12a2 2 0 0 1-2 2H6a2 2 0 0 1-2-2V4a2 2 0 0 1 2-2zM13 3.500V9h5.500zM9.800 12.700H16.100V19L14.010 16.910L11.010 19.910L8.890 17.790L11.890 14.790Z"/></svg>
<svg class="i" style="left:1167.00px;top:347.00px;width:20px;height:20px;fill:#212121;" viewBox="0 0 24 24"><path fill-rule="evenodd" d="M7 14H5v5h5v-2H7v-3zm-2-4h2V7h3V5H5v5zm12 7h-3v2h5v-5h-2v3zM14 5v2h3v3h2V5h-5z"/></svg>
<div class="b" style="left:749px;top:417.2px;width:8px;height:8px;border-radius:50%;background:#2196f3"></div>
<span class="t" style="left:1172.30px;top:390.14px;font-size:12px;color:#9e9e9e;letter-spacing:-0.323px;">Avg</span>
<span class="t" style="left:761.70px;top:415.14px;font-size:12px;color:#424242;">Temperature2</span>
<svg class="i" style="left:736px;top:322px;width:469px;height:363px" viewBox="0 0 469 363"><path d="M17.5 126V281" stroke="#dcdcdc" stroke-width="1"/><path d="M26.5 126V281" stroke="#dcdcdc" stroke-width="1"/><path d="M98.5 126V281" stroke="#dcdcdc" stroke-width="1"/><path d="M171.5 126V281" stroke="#dcdcdc" stroke-width="1"/><path d="M243.5 126V281" stroke="#dcdcdc" stroke-width="1"/><path d="M316.5 126V281" stroke="#dcdcdc" stroke-width="1"/><path d="M388.5 126V281" stroke="#dcdcdc" stroke-width="1"/><path d="M452.5 126V281" stroke="#dcdcdc" stroke-width="1"/><path d="M16 281.500H453" stroke="#6e7079" stroke-width="1"/><path d="M26.5 281V286" stroke="#6e7079" stroke-width="1"/><path d="M98.5 281V286" stroke="#6e7079" stroke-width="1"/><path d="M171.5 281V286" stroke="#6e7079" stroke-width="1"/><path d="M243.5 281V286" stroke="#6e7079" stroke-width="1"/><path d="M316.5 281V286" stroke="#6e7079" stroke-width="1"/><path d="M388.5 281V286" stroke="#6e7079" stroke-width="1"/><rect x="20.500" y="311.500" width="434" height="36" fill="#e9eeff" stroke="#d2dbee" stroke-width="1"/><rect x="20.500" y="311.500" width="434" height="7" fill="#dfe4f6"/><path d="M235.500 313.500v3M237.500 313.500v3M239.500 313.500v3" stroke="#fff" stroke-width="1"/><path d="M20.5 318.500V347.500" stroke="#acb8d1" stroke-width="1"/><rect x="17.5" y="323.500" width="6" height="19" rx="2" fill="#fff" stroke="#acb8d1" stroke-width="1"/><path d="M454.5 318.500V347.500" stroke="#acb8d1" stroke-width="1"/><rect x="451.5" y="323.500" width="6" height="19" rx="2" fill="#fff" stroke="#acb8d1" stroke-width="1"/></svg>
<span class="t" style="left:749.75px;top:612.47px;font-size:9.6px;color:#878787;letter-spacing:0.097px;">12:00</span>
<span class="t" style="left:821.75px;top:612.47px;font-size:9.6px;color:#878787;letter-spacing:0.097px;">16:00</span>
<span class="t" style="left:894.75px;top:612.47px;font-size:9.6px;color:#878787;letter-spacing:0.097px;">20:00</span>
<span class="t" style="left:1039.75px;top:612.47px;font-size:9.6px;color:#878787;letter-spacing:0.097px;">04:00</span>
<span class="t" style="left:1111.75px;top:612.47px;font-size:9.6px;color:#878787;letter-spacing:0.097px;">08:00</span>
<span class="t" style="left:959.90px;top:611.74px;font-size:12px;color:#606060;font-weight:700;letter-spacing:0.240px;">Jan 19</span>
<div class="card" style="left:1215px;top:322px;width:469px;height:363px"></div>
<span class="t" style="left:1232.50px;top:343.06px;font-size:16px;color:#212121;-webkit-text-stroke:0.42px #212121;letter-spacing:0.107px;">Temperature3</span>
<span class="t" style="left:1232.50px;top:364.64px;font-size:12px;color:#ababab;letter-spacing:-0.151px;">Realtime - last day</span>
<svg class="i" style="left:1614.00px;top:347.00px;width:20px;height:20px;fill:#212121;" viewBox="0 0 24 24"><path fill-rule="evenodd" d="M6 2h8l6 6v12a2 2 0 0 1-2 2H6a2 2 0 0 1-2-2V4a2 2 0 0 1 2-2zM13 3.500V9h5.500zM9.800 12.700H16.100V19L14.010 16.910L11.010 19.910L8.890 17.790L11.890 14.790Z"/></svg>
<svg class="i" style="left:1646.00px;top:347.00px;width:20px;height:20px;fill:#212121;" viewBox="0 0 24 24"><path fill-rule="evenodd" d="M7 14H5v5h5v-2H7v-3zm-2-4h2V7h3V5H5v5zm12 7h-3v2h5v-5h-2v3zM14 5v2h3v3h2V5h-5z"/></svg>
<div class="b" style="left:1228px;top:417.2px;width:8px;height:8px;border-radius:50%;background:#2196f3"></div>
<span class="t" style="left:1651.30px;top:390.14px;font-size:12px;color:#9e9e9e;letter-spacing:-0.323px;">Avg</span>
<span class="t" style="left:1240.70px;top:415.14px;font-size:12px;color:#424242;">Temperature3</span>
<svg class="i" style="left:1215px;top:322px;width:469px;height:363px" viewBox="0 0 469 363"><path d="M17.5 126V281" stroke="#dcdcdc" stroke-width="1"/><path d="M26.5 126V281" stroke="#dcdcdc" stroke-width="1"/><path d="M98.5 126V281" stroke="#dcdcdc" stroke-width="1"/><path d="M171.5 126V281" stroke="#dcdcdc" stroke-width="1"/><path d="M243.5 126V281" stroke="#dcdcdc" stroke-width="1"/><path d="M316.5 126V281" stroke="#dcdcdc" stroke-width="1"/><path d="M388.5 126V281" stroke="#dcdcdc" stroke-width="1"/><path d="M452.5 126V281" stroke="#dcdcdc" stroke-width="1"/><path d="M16 281.500H453" stroke="#6e7079" stroke-width="1"/><path d="M26.5 281V286" stroke="#6e7079" stroke-width="1"/><path d="M98.5 281V286" stroke="#6e7079" stroke-width="1"/><path d="M171.5 281V286" stroke="#6e7079" stroke-width="1"/><path d="M243.5 281V286" stroke="#6e7079" stroke-width="1"/><path d="M316.5 281V286" stroke="#6e7079" stroke-width="1"/><path d="M388.5 281V286" stroke="#6e7079" stroke-width="1"/><rect x="20.500" y="311.500" width="434" height="36" fill="#e9eeff" stroke="#d2dbee" stroke-width="1"/><rect x="20.500" y="311.500" width="434" height="7" fill="#dfe4f6"/><path d="M235.500 313.500v3M237.500 313.500v3M239.500 313.500v3" stroke="#fff" stroke-width="1"/><path d="M20.5 318.500V347.500" stroke="#acb8d1" stroke-width="1"/><rect x="17.5" y="323.500" width="6" height="19" rx="2" fill="#fff" stroke="#acb8d1" stroke-width="1"/><path d="M454.5 318.500V347.500" stroke="#acb8d1" stroke-width="1"/><rect x="451.5" y="323.500" width="6" height="19" rx="2" fill="#fff" stroke="#acb8d1" stroke-width="1"/></svg>
<span class="t" style="left:1228.75px;top:612.47px;font-size:9.6px;color:#878787;letter-spacing:0.097px;">12:00</span>
<span class="t" style="left:1300.75px;top:612.47px;font-size:9.6px;color:#878787;letter-spacing:0.097px;">16:00</span>
<span class="t" style="left:1373.75px;top:612.47px;font-size:9.6px;color:#878787;letter-spacing:0.097px;">20:00</span>
<span class="t" style="left:1518.75px;top:612.47px;font-size:9.6px;color:#878787;letter-spacing:0.097px;">04:00</span>
<span class="t" style="left:1590.75px;top:612.47px;font-size:9.6px;color:#878787;letter-spacing:0.097px;">08:00</span>
<span class="t" style="left:1438.90px;top:611.74px;font-size:12px;color:#606060;font-weight:700;letter-spacing:0.240px;">Jan 19</span>
<div class="b" style="left:274px;top:379px;width:450px;height:425px;background:#fff;border-radius:4px;box-shadow:0 8px 10px -5px rgba(0,0,0,.2),0 16px 24px 2px rgba(0,0,0,.14),0 6px 30px 5px rgba(0,0,0,.12)"></div>
<div class="b" style="left:291px;top:395px;width:417px;height:32px;background:#f0f0f0;border-radius:16px"></div>
<div class="b" style="left:292px;top:397px;width:206.5px;height:28px;background:#00695c;border-radius:14px"></div>
<span class="t" style="left:367.30px;top:404.15px;font-size:14px;color:#fff;font-weight:700;letter-spacing:-0.245px;">Realtime</span>
<span class="t" style="left:579.90px;top:403.15px;font-size:14px;color:#9e9e9e;letter-spacing:0.234px;">History</span>
<div class="b" style="left:290px;top:443px;width:418px;height:148px;border:1px solid #e0e0e0;border-radius:6px"></div>
<div class="b" style="left:290px;top:608px;width:418px;height:56px;border:1px solid #e0e0e0;border-radius:6px"></div>
<div class="b" style="left:290px;top:680px;width:418px;height:56px;border:1px solid #e0e0e0;border-radius:6px"></div>
<span class="t" style="left:307.60px;top:461.66px;font-size:16px;color:#212121;-webkit-text-stroke:0.42px #212121;letter-spacing:0.239px;">Time window</span>
<div class="b" style="left:308px;top:487px;width:132px;height:32px;background:#f0f0f0;border-radius:16px"></div>
<div class="b" style="left:309px;top:489px;width:54px;height:28px;border:1px solid #00695c;border-radius:14px;background:#f2f8f7"></div>
<span class="t" style="left:322.35px;top:495.55px;font-size:14px;color:#00695c;font-weight:700;letter-spacing:-0.374px;">Last</span>
<span class="t" style="left:375.30px;top:495.35px;font-size:14px;color:#9e9e9e;letter-spacing:-0.074px;">Relative</span>
<div class="b" style="left:585px;top:483px;width:106px;height:36px;border:1px solid #e0e0e0;border-radius:4px"></div>
<span class="t" style="left:601.70px;top:493.75px;font-size:14px;color:#00695c;font-weight:700;letter-spacing:-0.018px;">UTC+08:00</span>
<div class="b" style="left:307px;top:535px;width:384px;height:40px;border:2px solid #00695c;border-radius:4px"></div>
<span class="t" style="left:319.70px;top:546.75px;font-size:14px;color:#212121;letter-spacing:0.010px;">1 day</span>
<svg class="i" style="left:669px;top:553.2px;width:10px;height:5px;fill:#00695c" viewBox="0 0 10 5"><path d="M0 0h10L5 5z"/></svg>
<div class="b" style="left:274px;top:752px;width:450px;height:1px;background:#e0e0e0"></div>
<div class="b" style="left:641px;top:761px;width:75px;height:36px;background:#e0e0e0;border-radius:4px"></div>
<span class="t" style="left:653.00px;top:772.15px;font-size:14px;color:#a6a6a6;font-weight:700;letter-spacing:-0.242px;">Update</span>
<div class="b" style="left:307px;top:575px;width:384px;height:275px;background:#fff;border-radius:0 0 4px 4px;box-shadow:0 2px 4px -1px rgba(0,0,0,.2),0 4px 5px 0 rgba(0,0,0,.14),0 1px 10px 0 rgba(0,0,0,.12);overflow:hidden"><div class="b" style="left:0;top:75px;width:378px;height:48px;background:#f5f5f5"></div><div class="b" style="left:0;top:219px;width:375px;height:48px;background:#dedede"></div><div class="b" style="left:378px;top:198px;width:6px;height:77px;background:#dadada"></div></div>
<div class="b" style="left:307px;top:575px;width:384px;height:275px;overflow:hidden">
<span class="t" style="left:16.60px;top:-4.84px;font-size:16px;color:#212121;-webkit-text-stroke:0.13px #212121;letter-spacing:0.379px;">10 hours</span>
<span class="t" style="left:16.60px;top:43.16px;font-size:16px;color:#212121;-webkit-text-stroke:0.13px #212121;letter-spacing:0.379px;">12 hours</span>
<span class="t" style="left:16.60px;top:91.16px;font-size:16px;color:#00695c;-webkit-text-stroke:0.13px #00695c;letter-spacing:0.272px;">1 day</span>
<span class="t" style="left:16.60px;top:139.16px;font-size:16px;color:#212121;-webkit-text-stroke:0.13px #212121;letter-spacing:0.310px;">7 days</span>
<span class="t" style="left:16.60px;top:187.16px;font-size:16px;color:#212121;-webkit-text-stroke:0.13px #212121;letter-spacing:0.393px;">30 days</span>
<span class="t" style="left:16.60px;top:235.16px;font-size:16px;color:#212121;-webkit-text-stroke:0.13px #212121;letter-spacing:0.696px;">Custom</span>
</div>
<svg class="i" style="left:320px;top:550px;width:50px;height:270px" viewBox="320 550 50 270"><path fill="#f65052" d="M329.700 559.500 L330.700 559.500 L347.600 781.500 L354.800 779.300 L345.800 806 L333.800 782.300 L340.000 782.600 Z"/></svg>
</body></html>
